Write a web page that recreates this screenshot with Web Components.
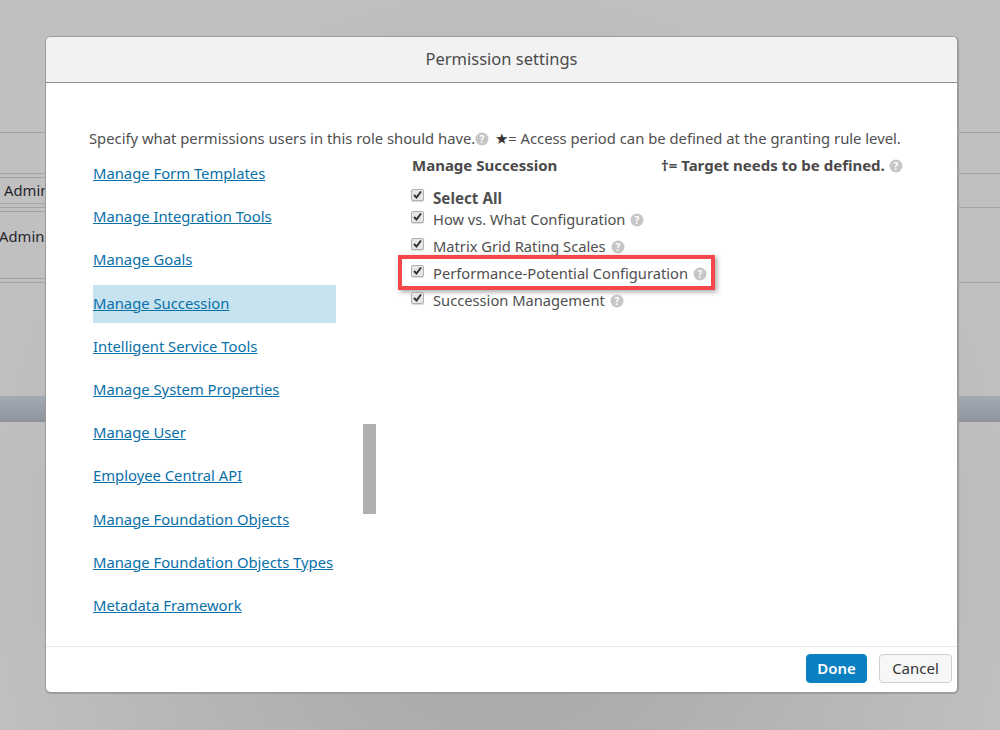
<!DOCTYPE html>
<html>
<head>
<meta charset="utf-8">
<title>Permission settings</title>
<style>
  html, body { margin: 0; height: 100%; }
  body { font-family: "Noto Sans", "Open Sans", sans-serif; overflow: hidden; }
</style>
</head>
<body>
<template id="help-tpl">
  <style>
    :host { display: inline-block; width: 14px; height: 14px; vertical-align: -2px; }
    svg { display: block; }
    circle { fill: #c6c6c6; }
    text { font: bold 10px "Noto Sans", sans-serif; fill: #fff; }
  </style>
  <svg width="14" height="14" viewBox="0 0 14 14"><circle cx="7" cy="7" r="6.5"/><text x="7" y="10.5" text-anchor="middle">?</text></svg>
</template>

<back-page>
  <div slot="a">Admin</div>
  <div slot="b">Admin</div>
</back-page>

<permission-dialog heading="Permission settings">
  <perm-sidebar slot="side" selected="Manage Succession">
    <a href="#">Manage Form Templates</a>
    <a href="#">Manage Integration Tools</a>
    <a href="#">Manage Goals</a>
    <a href="#">Manage Succession</a>
    <a href="#">Intelligent Service Tools</a>
    <a href="#">Manage System Properties</a>
    <a href="#">Manage User</a>
    <a href="#">Employee Central API</a>
    <a href="#">Manage Foundation Objects</a>
    <a href="#">Manage Foundation Objects Types</a>
    <a href="#">Metadata Framework</a>
  </perm-sidebar>
  <perm-panel slot="main" title-text="Manage Succession">
    <perm-check bold>Select All</perm-check>
    <perm-check help>How vs. What Configuration</perm-check>
    <perm-check help>Matrix Grid Rating Scales</perm-check>
    <perm-check help marked>Performance-Potential Configuration</perm-check>
    <perm-check help>Succession Management</perm-check>
  </perm-panel>
</permission-dialog>

<script>
class HelpIcon extends HTMLElement {
  constructor() {
    super()
    this.attachShadow({ mode: 'open' })
    this.shadowRoot.appendChild(document.getElementById('help-tpl').content.cloneNode(true))
  }
}
customElements.define('help-icon', HelpIcon)

// greyed page behind the dialog, only its edges show
class BackPage extends HTMLElement {
  constructor() {
    super()
    this.attachShadow({ mode: 'open' })
    this.shadowRoot.innerHTML = `
      <style>
        :host {
          display: block; position: absolute; inset: 0;
          background: #c0c0c0; color: #26262e; font-size: 14.8px;
        }
        .band { position: absolute; left: 0; right: 0; }
        .short { right: auto; width: 46px; }
        .l { height: 1px; background: #a4a4a4; }
        .bar { top: 396px; height: 26px; background: linear-gradient(#a3abb4, #8f969f); }
        .t { position: absolute; }
        .shade { position: absolute; inset: 0; background: radial-gradient(ellipse at 50% 75%, rgba(0,0,0,.15), rgba(0,0,0,0) 75%); }
      </style>
      <div class="band l" style="top:132px"></div>
      <div class="band l" style="top:173px"></div>
      <div class="band l short" style="top:177px"></div>
      <div class="band l short" style="top:203px"></div>
      <div class="band l" style="top:207px"></div>
      <div class="band l short" style="top:211px"></div>
      <div class="band l short" style="top:278px"></div>
      <div class="band l" style="top:282px"></div>
      <div class="band bar"></div>
      <div class="t" style="left:4px;top:180px"><slot name="a"></slot></div>
      <div class="t" style="left:-1px;top:226px"><slot name="b"></slot></div>
      <div class="shade"></div>`
  }
}
customElements.define('back-page', BackPage)

class PermissionDialog extends HTMLElement {
  constructor() {
    super()
    this.attachShadow({ mode: 'open' })
  }
  connectedCallback() {
    this.shadowRoot.innerHTML = `
      <style>
        :host {
          display: flex; flex-direction: column; position: absolute;
          left: 45px; top: 36px; width: 914px; height: 658px; box-sizing: border-box;
          background: #fff; border: 1px solid #9c9c9c; border-width: 1px 2px 2px 1px; border-radius: 6px;
          overflow: hidden; color: #4f4f4f;
        }
        header {
          flex: none; height: 43px; padding-bottom: 2px; background: #f2f2f2; border-bottom: 1px solid #8f8f8f;
          display: flex; align-items: center; justify-content: center;
          font-size: 16.5px; color: #4a4a4a;
        }
        .body { flex: 1; min-height: 0; padding: 44px 0 0 43px; font-size: 14.8px; }
        .intro { height: 22px; line-height: 22px; white-space: nowrap; margin-bottom: 5px; }
        .gap { margin-left: 2px; }
        .cols { display: flex; }
        .side { width: 290px; flex: none; position: relative; }
        .main { flex: 1; padding-left: 33px; }
        footer {
          flex: none; height: 46px; box-sizing: border-box; border-top: 1px solid #e8e8e8;
          display: flex; justify-content: flex-end; align-items: center; gap: 12px; padding: 0 5px 2px 0;
        }
        button { font: 15px "Noto Sans", sans-serif; height: 29px; border-radius: 4px; box-sizing: border-box; padding: 0 0 2px; }
        .done { width: 61px; background: #0a7fc1; color: #fff; border: 1px solid #0a7fc1; font-weight: 600; }
        .cancel { width: 73px; background: #f7f7f7; color: #333; border: 1px solid #cfcfcf; }
      </style>
      <header>${this.getAttribute('heading')}</header>
      <div class="body">
        <div class="intro">Specify what permissions users in this role should have.<help-icon></help-icon> <span class="gap"><span style="color:#333">★</span>= Access period can be defined at the granting rule level.</span></div>
        <div class="cols">
          <div class="side"><slot name="side"></slot></div>
          <div class="main"><slot name="main"></slot></div>
        </div>
      </div>
      <footer><button class="done">Done</button><button class="cancel">Cancel</button></footer>`
  }
}
customElements.define('permission-dialog', PermissionDialog)

class PermSidebar extends HTMLElement {
  constructor() {
    super()
    this.attachShadow({ mode: 'open' })
  }
  connectedCallback() {
    const selected = this.getAttribute('selected')
    const links = [...this.querySelectorAll('a')]
    const rows = links.map(a => `<a class="${a.textContent === selected ? 'on' : ''}" href="#">${a.textContent}</a>`).join('')
    this.shadowRoot.innerHTML = `
      <style>
        :host { display: block; position: relative; height: 470px; padding: 1px 0 0 4px; }
        a {
          display: block; height: 38px; line-height: 36px; margin-bottom: 5.2px; width: 243px; white-space: nowrap;
          color: #0a70a8; font-size: 14.8px; text-decoration: underline;
        }
        a.on { background: #c7e3f0; }
        .thumb { position: absolute; left: 274px; top: 270px; width: 13px; height: 90px; background: #b0b0b0; }
      </style>
      ${rows}
      <div class="thumb"></div>`
  }
}
customElements.define('perm-sidebar', PermSidebar)

class PermPanel extends HTMLElement {
  constructor() {
    super()
    this.attachShadow({ mode: 'open' })
  }
  connectedCallback() {
    this.shadowRoot.innerHTML = `
      <style>
        :host { display: block; }
        .top { display: flex; height: 22px; line-height: 22px; font-weight: 700; font-size: 15px; white-space: nowrap; margin-bottom: 11px; color: #4a4a4a; }
        .left { width: 249px; }
      </style>
      <div class="top"><div class="left">${this.getAttribute('title-text')}</div><div>†= Target needs to be defined. <help-icon></help-icon></div></div>
      <slot></slot>`
  }
}
customElements.define('perm-panel', PermPanel)

class PermCheck extends HTMLElement {
  constructor() {
    super()
    this.attachShadow({ mode: 'open' })
  }
  connectedCallback() {
    const bold = this.hasAttribute('bold')
    this.shadowRoot.innerHTML = `
      <style>
        :host { display: block; position: relative; height: ${bold ? 21 : 27}px; font-size: ${bold ? 15.2 : 14.7}px; }
        .row { display: flex; align-items: flex-start; height: 100%; line-height: 22px; white-space: nowrap; }
        .box {
          flex: none; width: 13px; height: 12px; box-sizing: border-box; margin: ${bold ? 2 : 3}px 9px 0 -1px;
          border: 1px solid #b0b0b0; border-radius: 2px; background: #e6e6e6; box-shadow: 0 1px 1px rgba(0,0,0,.15);
        }
        .box svg { display: block; }
        .txt { ${bold ? 'font-weight: 700;' : ''} }
        help-icon { margin-left: 5px; }
        .mark {
          position: absolute; left: -14px; top: -7px; width: 309px; height: 27px;
          border: 4px solid #f4474c; box-shadow: 2px 2px 5px rgba(0,0,0,.35);
        }
      </style>
      <div class="row">
        <div class="box"><svg width="11" height="10" viewBox="0 0 11 10"><path d="M2 5 L4.5 7.5 L9 1.5" fill="none" stroke="#333" stroke-width="2"/></svg></div>
        <div class="txt"><slot></slot>${this.hasAttribute('help') ? '<help-icon></help-icon>' : ''}</div>
      </div>
      ${this.hasAttribute('marked') ? '<div class="mark"></div>' : ''}`
  }
}
customElements.define('perm-check', PermCheck)
</script>
</body>
</html>
